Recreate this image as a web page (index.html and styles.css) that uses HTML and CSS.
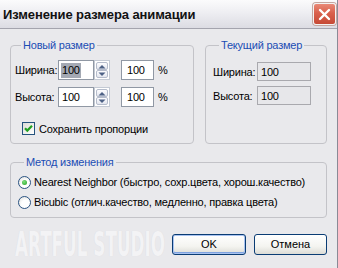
FILE: index.html
```html
<!DOCTYPE html>
<html lang="ru">
<head>
<meta charset="utf-8">
<link rel="stylesheet" href="styles.css">
</head>
<body>
<div class="window">
  <div class="titlebar">
    <span class="title">Изменение размера анимации</span>
    <span class="close"><svg width="13" height="13" viewBox="0 0 13 13"><path d="M2 2 L11 11 M11 2 L2 11" stroke="#fff" stroke-width="2.4" stroke-linecap="round"/></svg></span>
  </div>
  <div class="content">
    <div class="top">
      <fieldset class="group newsize">
        <legend>Новый размер</legend>
        <div class="row">
          <span class="lbl">Ширина:</span>
          <span class="input w"><span class="sel">100</span></span>
          <span class="spin"><span class="sb up"><svg width="8" height="5" viewBox="0 0 8 5"><path d="M0.5 4.5 L4 1 L7.5 4.5 Z" fill="#4d6185"/></svg></span><span class="sb down"><svg width="8" height="5" viewBox="0 0 8 5"><path d="M0.5 0.5 L4 4 L7.5 0.5 Z" fill="#4d6185"/></svg></span></span>
          <span class="input p">100</span>
          <span class="pct">%</span>
        </div>
        <div class="row">
          <span class="lbl">Высота:</span>
          <span class="input w">100</span>
          <span class="spin"><span class="sb up"><svg width="8" height="5" viewBox="0 0 8 5"><path d="M0.5 4.5 L4 1 L7.5 4.5 Z" fill="#4d6185"/></svg></span><span class="sb down"><svg width="8" height="5" viewBox="0 0 8 5"><path d="M0.5 0.5 L4 4 L7.5 0.5 Z" fill="#4d6185"/></svg></span></span>
          <span class="input p">100</span>
          <span class="pct">%</span>
        </div>
        <div class="check">
          <span class="cb"><svg width="11" height="11" viewBox="0 0 11 11"><path d="M2 5.2 L4.3 7.6 L9 2.8" fill="none" stroke="#21a121" stroke-width="2.2"/></svg></span>
          <span>Сохранить пропорции</span>
        </div>
      </fieldset>
      <fieldset class="group cursize">
        <legend>Текущий размер</legend>
        <div class="rorow first"><span class="lbl2">Ширина:</span><span class="ro">100</span></div>
        <div class="rorow"><span class="lbl2">Высота:</span><span class="ro">100</span></div>
      </fieldset>
    </div>
    <fieldset class="group method">
      <legend>Метод изменения</legend>
      <div class="radio first"><span class="rb on"></span><span>Nearest Neighbor (быстро, сохр.цвета, хорош.качество)</span></div>
      <div class="radio"><span class="rb"></span><span>Bicubic (отлич.качество, медленно, правка цвета)</span></div>
    </fieldset>
    <div class="bottom">
      <div class="watermark">ARTFUL STUDIO</div>
      <div class="buttons">
        <button class="btn default">OK</button>
        <button class="btn cancel">Отмена</button>
      </div>
    </div>
  </div>
</div>
</body>
</html>
```
FILE: styles.css
```css
* { box-sizing: border-box; }
html, body { margin: 0; padding: 0; }
body {
  width: 338px;
  height: 268px;
  overflow: hidden;
  font-family: "Liberation Sans", Arial, sans-serif;
  font-size: 11px;
  letter-spacing: -0.2px;
  color: #000;
}
.window {
  width: 338px;
  height: 268px;
  background: #e9e9ec;
  border-right: 1px solid #8a8a96;
  display: flex;
  flex-direction: column;
}
.titlebar {
  height: 29px;
  flex: none;
  display: flex;
  align-items: center;
  justify-content: space-between;
  padding: 0 1px 1px 3px;
  background: linear-gradient(#fbfbfc 0%, #eeeef2 45%, #dcdce3 100%);
  border-bottom: 1px solid #a4a4ae;
}
.title {
  font-weight: bold;
  font-size: 13px;
  letter-spacing: -0.1px;
  color: #111;
  margin-top: 1px;
}
.close {
  width: 23px;
  height: 22px;
  border: 1px solid #f3f3f3;
  border-radius: 3px;
  background: linear-gradient(#e98a78 0%, #d9604c 45%, #c64a36 100%);
  box-shadow: 0 0 0 1px #c4a6a0;
  display: flex;
  align-items: center;
  justify-content: center;
  margin-top: 1px;
}
.content {
  flex: 1;
  padding: 10px 10px 0 10px;
  display: flex;
  flex-direction: column;
}
.top {
  display: flex;
  gap: 11px;
}
fieldset.group {
  margin: 0;
  padding: 0;
  min-width: 0;
  border: 1px solid #c3c3c8;
  border-radius: 4px;
}
legend {
  margin-left: 6px;
  padding: 0 2px;
  color: #1b4db4;
  font-size: 11px;
  line-height: 12px;
}
.newsize {
  width: 184px;
  padding: 9px 0 8px 4px !important;
}
.cursize {
  width: 122px;
  padding: 11px 0 0 7px !important;
}
.row {
  display: flex;
  align-items: center;
  height: 20px;
}
.row + .row { margin-top: 7px; }
.lbl { width: 43px; }
.input {
  height: 20px;
  background: #fff;
  border: 1px solid #9098a4;
  display: flex;
  align-items: center;
  padding-left: 3px;
}
.input.w { width: 36px; }
.input.p { width: 33px; margin-left: 11px; padding-left: 5px; }
.sel {
  background: #a4a9b3;
  line-height: 15px;
  padding: 0 1px;
  margin-left: -1px;
}
.pct { margin-left: 4px; }
.spin {
  width: 16px;
  height: 20px;
  display: flex;
  flex-direction: column;
  border: 1px solid #c4cad4;
  background: #fff;
  padding: 1px;
}
.sb {
  flex: 1;
  display: flex;
  align-items: center;
  justify-content: center;
  border: 1px solid #b5bccb;
  border-radius: 2px;
  background: linear-gradient(#fdfdff, #e3e6ee);
}
.check {
  margin-top: 15px;
  margin-left: 7px;
  display: flex;
  align-items: center;
  gap: 4px;
}
.cb {
  width: 13px;
  height: 13px;
  border: 1px solid #25537e;
  background: linear-gradient(135deg, #dcdcd6, #fff);
  display: flex;
  align-items: center;
  justify-content: center;
}
.rorow {
  display: flex;
  align-items: center;
  height: 19px;
}
.rorow + .rorow { margin-top: 5px; }
.lbl2 { width: 44px; }
.ro {
  width: 54px;
  height: 19px;
  border: 1px solid #a9a9ae;
  background: #e7e7ea;
  display: flex;
  align-items: center;
  padding-left: 3px;
}
.method {
  margin-top: 12px !important;
  padding: 6px 0 7px 7px !important;
}
.radio {
  display: flex;
  align-items: center;
  height: 16px;
  gap: 3px;
}
.radio + .radio { margin-top: 4px; }
.rb {
  width: 13px;
  height: 13px;
  border-radius: 50%;
  border: 1px solid #2a5382;
  background: radial-gradient(circle at 60% 65%, #fff 40%, #dcdcd8 100%);
  display: flex;
  align-items: center;
  justify-content: center;
}
.rb.on::after {
  content: "";
  width: 5px;
  height: 5px;
  border-radius: 50%;
  background: radial-gradient(circle at 40% 35%, #7ee07e, #22a022);
}
.bottom {
  margin-top: 12px;
  display: flex;
  justify-content: space-between;
  align-items: center;
  height: 28px;
}
.watermark {
  margin-left: 5px;
  width: 145px;
  white-space: nowrap;
  font-family: "DejaVu Sans Condensed", "DejaVu Sans", sans-serif;
  font-weight: bold;
  font-size: 34px;
  letter-spacing: 0;
  color: #f3f3f5;
  text-shadow: 0 0 1px #d8d8dd;
  transform: scaleX(0.55);
  transform-origin: left center;
  line-height: 28px;
}
.buttons {
  display: flex;
  gap: 8px;
}
.btn {
  height: 21px;
  font-family: "Liberation Sans", Arial, sans-serif;
  font-size: 11px;
  color: #000;
  border: 1px solid #0a3c74;
  border-radius: 3px;
  background: linear-gradient(#ffffff 0%, #f4f4f0 60%, #dcdcd6 100%);
  padding: 0;
}
.btn.default {
  width: 74px;
  box-shadow: inset 0 0 0 1px #a9c3f0, inset 0 -1px 0 1px #7ea2e0;
}
.btn.cancel { width: 73px; }
```
